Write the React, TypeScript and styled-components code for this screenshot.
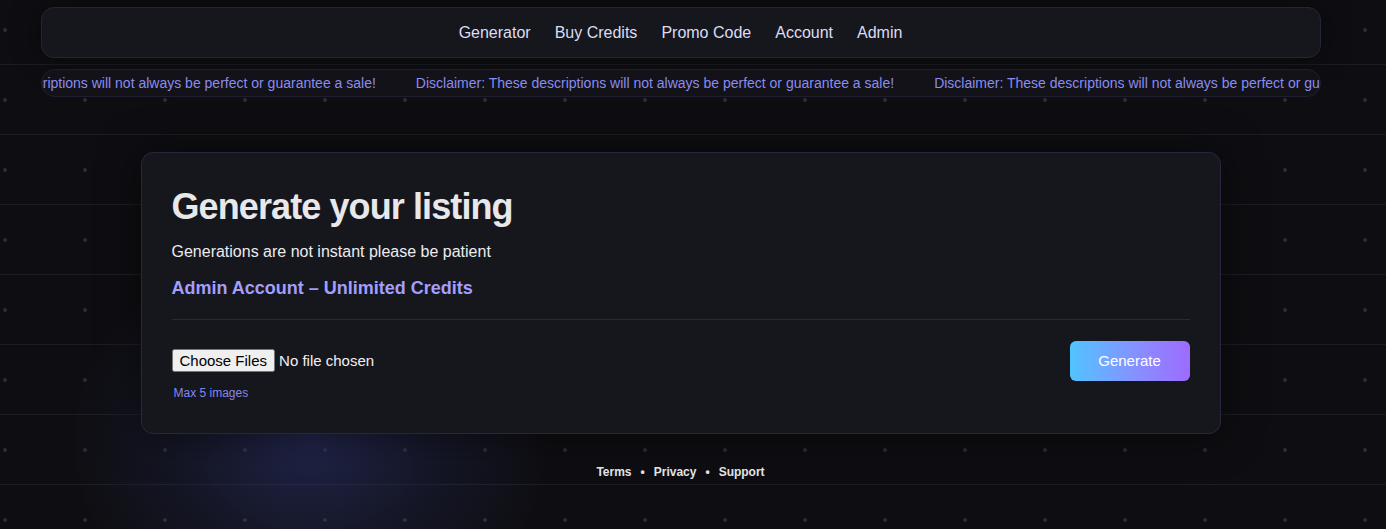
import React from "react";
import styled, { createGlobalStyle } from "styled-components";

const Global = createGlobalStyle`
  html, body { margin: 0; padding: 0; }
  body {
    min-height: 529px;
    font-family: "Liberation Sans", Arial, sans-serif;
    color: #e6e6ea;
    background-color: #0e0e12;
    background-image:
      radial-gradient(ellipse 240px 200px at 310px 440px, rgba(50, 58, 125, 0.5), rgba(50, 58, 125, 0.18) 55%, rgba(50, 58, 125, 0) 100%),
      radial-gradient(circle at 5px 30px, #2b2b33 1.6px, transparent 2.2px),
      linear-gradient(to bottom, transparent 64px, #1c1c24 64px, #1c1c24 65px, transparent 65px);
    background-size: 100% 100%, 80px 70px, 100% 70px;
    background-repeat: no-repeat, repeat, repeat;
  }
`;

const Page = styled.div`
  width: 1361px;
  display: flex;
  flex-direction: column;
  align-items: center;
  padding-top: 7px;
`;

const Nav = styled.nav`
  width: 1280px;
  height: 51px;
  box-sizing: border-box;
  border: 1px solid #25253a;
  border-radius: 13px;
  background: #16171d;
  box-shadow: 0 0 30px rgba(0, 0, 0, 0.45);
  display: flex;
  align-items: center;
  justify-content: center;
  gap: 24px;
`;

const NavLink = styled.a`
  font-size: 16px;
  color: #dcdcf4;
  text-decoration: none;
  cursor: pointer;
`;

const Ticker = styled.div`
  width: 1280px;
  height: 28px;
  margin-top: 11px;
  box-sizing: border-box;
  border: 1px solid #1f1f2e;
  border-radius: 14px;
  background: #121218;
  overflow: hidden;
  display: flex;
  align-items: center;
`;

const Track = styled.div`
  display: flex;
  gap: 40px;
  white-space: nowrap;
  transform: translateX(-144px);
`;

const TickerItem = styled.span`
  font-size: 14px;
  color: #8a8cf0;
`;

const Card = styled.section`
  width: 1080px;
  margin-top: 55px;
  box-sizing: border-box;
  padding: 32px 30px 31px;
  border: 1px solid #27273d;
  border-radius: 12px;
  background: #16171d;
  box-shadow: 0 0 40px rgba(0, 0, 0, 0.5);
`;

const Title = styled.h1`
  margin: 0;
  font-size: 36px;
  line-height: 1.2;
  letter-spacing: -0.9px;
  font-weight: 700;
  color: #e8e8ea;
`;

const Subtitle = styled.p`
  margin: 14px 0 0;
  font-size: 16px;
  line-height: 1.2;
  color: #ececef;
`;

const CreditLine = styled.div`
  margin-top: 17px;
  font-size: 18px;
  font-weight: 700;
  line-height: 1.2;
  color: #a29eff;
`;

const Divider = styled.hr`
  margin: 19px 0 0;
  border: none;
  border-top: 1px solid #2a2a34;
`;

const Row = styled.div`
  margin-top: 21px;
  display: flex;
  align-items: center;
  justify-content: space-between;
`;

const FileInput = styled.input`
  font-family: "Liberation Sans", Arial, sans-serif;
  font-size: 15px;
  color: #f0f0f2;
`;

const GenerateButton = styled.button`
  width: 120px;
  height: 40px;
  border: none;
  border-radius: 6px;
  background: linear-gradient(90deg, #52c4ff 0%, #8a8cff 60%, #9d6bff 100%);
  color: #ffffff;
  font-family: "Liberation Sans", Arial, sans-serif;
  font-size: 15px;
  cursor: pointer;
`;

const Hint = styled.div`
  margin-top: 4px;
  padding-left: 2px;
  font-size: 12px;
  line-height: 1.4;
  color: #8486f0;
`;

const Footer = styled.footer`
  margin-top: 31px;
  display: flex;
  align-items: center;
  font-size: 12px;
  font-weight: 700;
  color: #e2e2e6;
`;

const FooterLink = styled.a`
  color: inherit;
  text-decoration: none;
`;

const Sep = styled.span`
  margin: 0 9px;
`;

const disclaimer =
  "Disclaimer: These descriptions will not always be perfect or guarantee a sale!";

export default function App() {
  return (
    <>
      <Global />
      <Page>
        <Nav>
          {["Generator", "Buy Credits", "Promo Code", "Account", "Admin"].map((l) => (
            <NavLink key={l}>{l}</NavLink>
          ))}
        </Nav>
        <Ticker>
          <Track>
            {[0, 1, 2, 3].map((i) => (
              <TickerItem key={i}>{disclaimer}</TickerItem>
            ))}
          </Track>
        </Ticker>
        <Card>
          <Title>Generate your listing</Title>
          <Subtitle>Generations are not instant please be patient</Subtitle>
          <CreditLine>Admin Account – Unlimited Credits</CreditLine>
          <Divider />
          <Row>
            <FileInput type="file" multiple accept="image/*" />
            <GenerateButton>Generate</GenerateButton>
          </Row>
          <Hint>Max 5 images</Hint>
        </Card>
        <Footer>
          <FooterLink>Terms</FooterLink>
          <Sep>•</Sep>
          <FooterLink>Privacy</FooterLink>
          <Sep>•</Sep>
          <FooterLink>Support</FooterLink>
        </Footer>
      </Page>
    </>
  );
}
